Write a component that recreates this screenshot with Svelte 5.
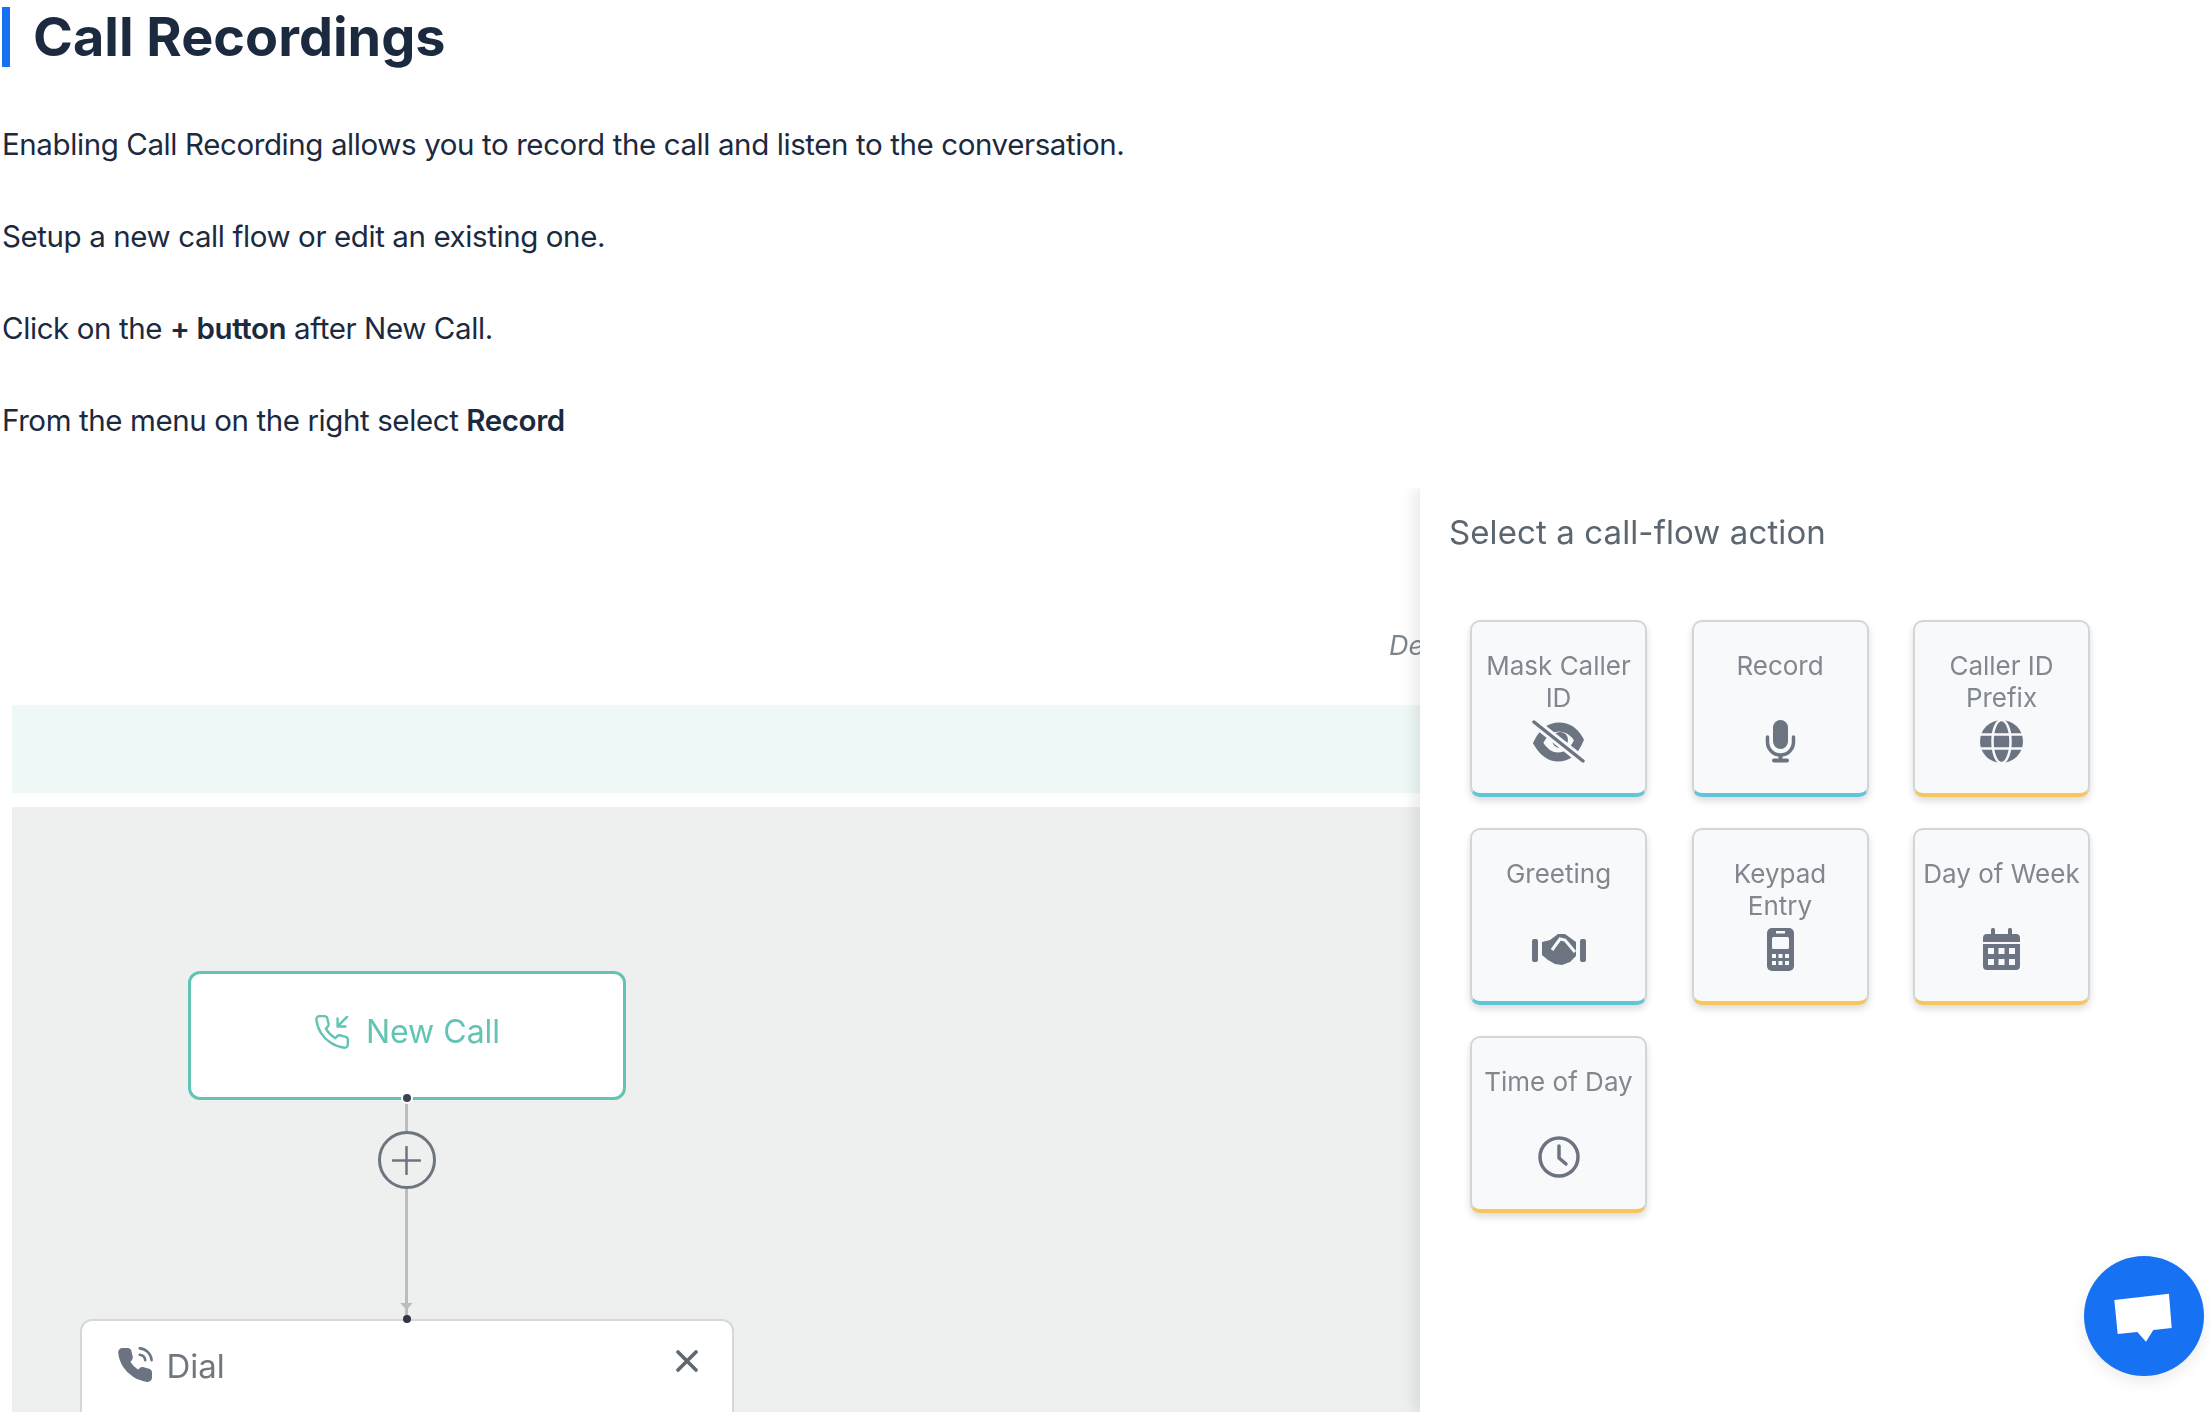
<script>
  const steps = [
    { id: 'intro', html: 'Enabling Call Recording allows you to record the call and listen to the conversation.' },
    { id: 'setup', html: 'Setup a new call flow or edit an existing one.' },
  ];

  const actions = [
    { label: 'Mask Caller ID', icon: 'eye', tone: 'teal' },
    { label: 'Record', icon: 'mic', tone: 'teal' },
    { label: 'Caller ID Prefix', icon: 'globe', tone: 'amber' },
    { label: 'Greeting', icon: 'hands', tone: 'teal' },
    { label: 'Keypad Entry', icon: 'keypad', tone: 'amber' },
    { label: 'Day of Week', icon: 'calendar', tone: 'amber' },
    { label: 'Time of Day', icon: 'clock', tone: 'amber' },
  ];

  const phone = 'M22 16.92v3a2 2 0 0 1-2.18 2 19.79 19.79 0 0 1-8.63-3.07 19.5 19.5 0 0 1-6-6 19.79 19.79 0 0 1-3.07-8.67A2 2 0 0 1 4.11 2h3a2 2 0 0 1 2 1.72 12.84 12.84 0 0 0 .7 2.81 2 2 0 0 1-.45 2.11L8.09 9.91a16 16 0 0 0 6 6l1.27-1.27a2 2 0 0 1 2.11-.45 12.84 12.84 0 0 0 2.81.7A2 2 0 0 1 22 16.92z';
</script>

<main class="doc">
  <h1>Call Recordings</h1>
  {#each steps as step (step.id)}
    <p>{step.html}</p>
  {/each}
  <p>Click on the <b>+ button</b> after New Call.</p>
  <p>From the menu on the right select <b>Record</b></p>

  <section class="shot">
    <div class="workspace">
      <div class="strip"><em>De</em></div>
      <div class="band"></div>
      <div class="canvas">
        <div class="flow">
          <div class="node-start">
            <svg class="incoming" viewBox="0 0 24 24" fill="none" stroke="currentColor" stroke-width="1.5" stroke-linecap="round" stroke-linejoin="round">
              <path d={phone} />
              <path d="M15.5 3.5v5h5M21.5 2.500l-6 6" />
            </svg>
            <span>New Call</span>
            <i class="dot dot-bottom"></i>
          </div>
          <div class="stub"></div>
          <button class="add" aria-label="Add action">
            <svg viewBox="0 0 30 30" stroke="currentColor" stroke-width="2.600" stroke-linecap="round"><path d="M1 15h28M15 1v28" /></svg>
          </button>
          <div class="link">
            <svg class="arrow" viewBox="0 0 16 10"><path d="M1 1h14L8 9z" fill="#b9bcc1" /></svg>
          </div>
          <div class="node-dial">
            <i class="dot dot-top"></i>
            <svg class="dial-icon" viewBox="0 0 24 24">
              <path d={phone} fill="#6b7480" stroke="#6b7480" stroke-width="1.500" stroke-linejoin="round" />
              <path d="M15 5.500a4 4 0 0 1 3.500 3.500M15 1.500a8 8 0 0 1 7.500 7.500" fill="none" stroke="#6b7480" stroke-width="1.600" stroke-linecap="round" />
            </svg>
            <span>Dial</span>
            <svg class="close" viewBox="0 0 22 22" stroke="#5f6870" stroke-width="3.600" stroke-linecap="round"><path d="M2 2l18 18M20 2L2 20" /></svg>
          </div>
        </div>
      </div>
    </div>

    <aside class="panel">
      <h2>Select a call-flow action</h2>
      <div class="grid">
        {#each actions as action (action.label)}
          <div class="card {action.tone}">
            <div class="label">{action.label}</div>
            <div class="icon">
              {#if action.icon === 'eye'}
                <svg width="53" height="43" viewBox="0 0 53 43">
                  <path d="M6 23C12 11 19 7 27 7s15 4 20 13c-5 12-13 17-21 17S12 33 6 23z" fill="none" stroke="#6b7480" stroke-width="9" />
                  <circle cx="28" cy="20" r="8" fill="#6b7480" />
                  <path d="M2 2l49 39" stroke="#f8f9fb" stroke-width="9" />
                  <path d="M2 2l49 39" stroke="#6b7480" stroke-width="3.500" stroke-linecap="round" />
                </svg>
              {:else if action.icon === 'mic'}
                <svg width="31" height="43" viewBox="0 0 31 43" fill="#6b7480">
                  <rect x="8" y="0" width="15" height="29" rx="7.500" />
                  <path d="M2.500 17v5a13 13 0 0 0 26 0v-5" fill="none" stroke="#6b7480" stroke-width="3.500" stroke-linecap="round" />
                  <path d="M13.500 34h4v5h-4z" />
                  <rect x="7" y="38.500" width="17" height="4" rx="2" />
                </svg>
              {:else if action.icon === 'globe'}
                <svg width="43" height="43" viewBox="0 0 43 43">
                  <circle cx="21.500" cy="21.500" r="21.500" fill="#6b7480" />
                  <path d="M1 14.500h41M1 28.500h41" stroke="#f8f9fb" stroke-width="2.500" />
                  <ellipse cx="21.500" cy="21.500" rx="9" ry="21.500" fill="none" stroke="#f8f9fb" stroke-width="2.500" />
                </svg>
              {:else if action.icon === 'hands'}
                <svg width="54" height="32" viewBox="0 0 54 32" fill="#6b7480">
                  <rect x="0" y="6" width="6" height="23" rx="2" />
                  <rect x="48" y="6" width="6" height="23" rx="2" />
                  <path d="M10 9l8-2 8-6h7l11 8v14l-6 6-8 3-7-1-7-4-6-5z" />
                  <path d="M20 17l8-11 5 1 10 12" fill="none" stroke="#f8f9fb" stroke-width="3" />
                </svg>
              {:else if action.icon === 'keypad'}
                <svg width="27" height="43" viewBox="0 0 27 43">
                  <rect width="27" height="43" rx="5" fill="#6b7480" />
                  <rect x="9" y="3" width="9" height="2.500" fill="#f8f9fb" />
                  <rect x="5" y="9" width="17" height="12" rx="1.500" fill="#f8f9fb" />
                  <g fill="#f8f9fb">
                    <rect x="5" y="26" width="4" height="4" /><rect x="11.500" y="26" width="4" height="4" /><rect x="18" y="26" width="4" height="4" />
                    <rect x="5" y="33" width="4" height="4" /><rect x="11.500" y="33" width="4" height="4" /><rect x="18" y="33" width="4" height="4" />
                  </g>
                </svg>
              {:else if action.icon === 'calendar'}
                <svg width="37" height="42" viewBox="0 0 37 42" fill="#6b7480">
                  <rect x="8" y="0" width="4" height="8" rx="1.500" />
                  <rect x="25" y="0" width="4" height="8" rx="1.500" />
                  <path d="M0 10a4 4 0 0 1 4-4h29a4 4 0 0 1 4 4v4H0z" />
                  <path d="M0 16h37v22a4 4 0 0 1-4 4H4a4 4 0 0 1-4-4z" />
                  <g fill="#f8f9fb">
                    <rect x="5" y="20" width="6" height="6" /><rect x="15.500" y="20" width="6" height="6" /><rect x="26" y="20" width="6" height="6" />
                    <rect x="5" y="31" width="6" height="6" /><rect x="15.500" y="31" width="6" height="6" /><rect x="26" y="31" width="6" height="6" />
                  </g>
                </svg>
              {:else}
                <svg width="42" height="42" viewBox="0 0 42 42" fill="none" stroke="#6b7480" stroke-width="3.500" stroke-linecap="round" stroke-linejoin="round">
                  <circle cx="21" cy="21" r="19" />
                  <path d="M21 10v12l7 6" />
                </svg>
              {/if}
            </div>
          </div>
        {/each}
      </div>
    </aside>
  </section>

  <button class="chat" aria-label="Open chat">
    <svg viewBox="0 0 120 120"><path d="M30.300 44L85 37.700 87.700 72 69.300 74 62 85.700 53.300 76 33.700 78z" fill="#fff" /></svg>
  </button>
</main>

<style>
  :global(body) {
    margin: 0;
    background: #fff;
    overflow: hidden;
  }

  .doc {
    height: 1412px;
    overflow: hidden;
    font-family: Inter, "Liberation Sans", sans-serif;
    color: #1b2a3e;
  }

  h1 {
    margin: 7px 0 57px 2px;
    height: 60px;
    padding-left: 23px;
    border-left: 8px solid #1672f3;
    font-size: 54px;
    font-weight: 700;
    line-height: 60px;
    letter-spacing: 0;
  }

  p {
    margin: 0 0 52px;
    padding-left: 2px;
    font-size: 29.5px;
    line-height: 40px;
    letter-spacing: -0.4px;
  }

  p b {
    font-weight: 600;
  }

  .shot {
    display: flex;
    height: 924px;
    margin-top: -4px;
    overflow: hidden;
    filter: blur(0.5px);
  }

  .workspace {
    display: flex;
    flex-direction: column;
    flex: none;
    width: 1408px;
    padding-left: 12px;
  }

  .strip {
    flex: none;
    display: flex;
    justify-content: flex-end;
    height: 217px;
    padding-top: 141px;
    box-sizing: border-box;
    font-size: 27px;
    color: #7d858c;
  }

  .strip em {
    margin-right: -4px;
  }

  .band {
    flex: none;
    height: 88px;
    margin-bottom: 14px;
    background: #eef8f6;
  }

  .canvas {
    flex: 1;
    min-height: 0;
    padding: 164px 0 0 67.500px;
    background: #eef0ef;
  }

  .flow {
    display: flex;
    flex-direction: column;
    align-items: center;
    width: 654px;
  }

  .node-start {
    position: relative;
    display: flex;
    align-items: center;
    justify-content: center;
    gap: 15px;
    box-sizing: border-box;
    width: 438px;
    height: 129px;
    padding-bottom: 8px;
    background: #fff;
    border: 3px solid #64c4b4;
    border-radius: 12px;
    color: #64c4b4;
    font-size: 32px;
  }

  .incoming {
    width: 38px;
    height: 38px;
  }

  .dot {
    position: absolute;
    left: 50%;
    width: 8px;
    height: 8px;
    margin-left: -4px;
    border-radius: 50%;
    background: #3b4450;
    box-shadow: 0 0 0 2px #fff;
  }

  .dot-bottom {
    bottom: -5px;
  }

  .dot-top {
    top: -6px;
    background: #2f3742;
    box-shadow: none;
  }

  .stub {
    flex: none;
    width: 3px;
    height: 31px;
    background: #b9bcc1;
  }

  .add {
    flex: none;
    display: flex;
    align-items: center;
    justify-content: center;
    box-sizing: border-box;
    width: 58px;
    height: 58px;
    padding: 0;
    background: #eef0ef;
    border: 3px solid #6d7680;
    border-radius: 50%;
    color: #6d7680;
  }

  .add svg {
    width: 29px;
    height: 29px;
  }

  .link {
    flex: none;
    position: relative;
    width: 3px;
    height: 130px;
    background: #b9bcc1;
  }

  .arrow {
    position: absolute;
    left: -6px;
    bottom: 8px;
    width: 15px;
    height: 9px;
  }

  .node-dial {
    flex: none;
    position: relative;
    display: flex;
    align-items: flex-start;
    gap: 13px;
    box-sizing: border-box;
    width: 654px;
    height: 200px;
    padding: 25px 34px;
    background: #fff;
    border: 2px solid #d5d7d9;
    border-radius: 12px;
    color: #70787f;
    font-size: 33px;
    line-height: 40px;
  }

  .dial-icon {
    width: 38px;
    height: 38px;
  }

  .close {
    position: absolute;
    top: 29px;
    right: 34px;
    width: 22px;
    height: 22px;
  }

  .panel {
    position: relative;
    flex: 1;
    padding: 24px 0 0 29px;
    background: #fff;
    box-shadow: -6px 0 14px rgba(0, 0, 0, 0.09);
  }

  h2 {
    margin: 0 0 68px;
    font-size: 33px;
    font-weight: 400;
    line-height: 40px;
    letter-spacing: 0.1px;
    color: #5c6670;
  }

  .grid {
    display: grid;
    grid-template-columns: repeat(3, 177px);
    grid-auto-rows: 177px;
    column-gap: 44.500px;
    row-gap: 31px;
    margin-left: 21px;
  }

  .card {
    box-sizing: border-box;
    padding: 28px 6px 0;
    background: #f8f9fb;
    border: 2px solid #d3d6d8;
    border-bottom-width: 4px;
    border-radius: 10px;
    box-shadow: 0 4px 7px rgba(0, 0, 0, 0.14);
    text-align: center;
  }

  .card.teal {
    border-bottom-color: #62c3d9;
  }

  .card.amber {
    border-bottom-color: #f7c65c;
  }

  .label {
    height: 64px;
    font-size: 26px;
    line-height: 32px;
    color: #80878e;
  }

  .icon {
    display: flex;
    align-items: center;
    justify-content: center;
    height: 44px;
    margin-top: 5px;
  }

  .chat {
    position: fixed;
    left: 2084px;
    top: 1256px;
    width: 120px;
    height: 120px;
    padding: 0;
    border: none;
    border-radius: 50%;
    background: #1672f3;
    box-shadow: 0 6px 16px rgba(0, 0, 0, 0.08);
  }

  .chat svg {
    display: block;
    width: 120px;
    height: 120px;
  }
</style>
